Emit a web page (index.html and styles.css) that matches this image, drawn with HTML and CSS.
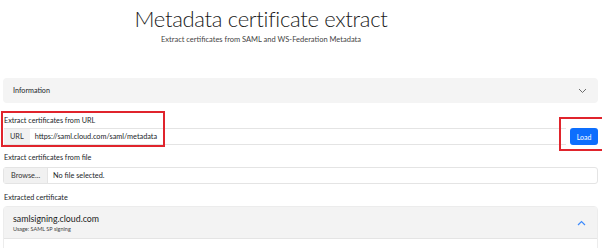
FILE: index.html
```html
<!DOCTYPE html>
<html lang="en">
<head>
  <meta charset="UTF-8">
  <title>Metadata certificate extract</title>
  <link rel="stylesheet" href="styles.css">
</head>
<body>
  <header class="top">
    <h1>Metadata certificate extract</h1>
    <p class="lead">Extract certificates from SAML and WS-Federation Metadata</p>
  </header>

  <main class="page">
    <div class="accordion">
      <span>Information</span>
      <svg class="chev" width="9" height="6" viewBox="0 0 9 6"><path d="M1 1l3.5 3.5L8 1" fill="none" stroke="#6c6c6c" stroke-width="1"/></svg>
    </div>

    <section class="field url-field">
      <label>Extract certificates from URL</label>
      <div class="row">
        <div class="group">
          <span class="addon">URL</span>
          <span class="value">https://saml.cloud.com/saml/metadata</span>
        </div>
        <button class="load">Load</button>
      </div>
      <div class="mark mark-url"></div>
      <div class="mark mark-load"></div>
    </section>

    <section class="field file-field">
      <label>Extract certificates from file</label>
      <div class="group file">
        <span class="addon browse">Browse...</span>
        <span class="value">No file selected.</span>
      </div>
    </section>

    <section class="field cert-field">
      <label>Extracted certificate</label>
      <div class="card">
        <div class="card-head">
          <div>
            <div class="cert-name">samlsigning.cloud.com</div>
            <div class="cert-use">Usage: SAML SP signing</div>
          </div>
          <svg class="chev" width="9" height="6" viewBox="0 0 9 6"><path d="M1 5l3.5-3.5L8 5" fill="none" stroke="#3d8bfd" stroke-width="1.2"/></svg>
        </div>
        <div class="card-body"></div>
      </div>
    </section>
  </main>
</body>
</html>
```

FILE: styles.css
```css
html {
  font-family: "Lato", sans-serif;
}

body {
  margin: 0;
  background-color: #fff;
  color: #212529;
}

.top {
  text-align: center;
  padding: 4px 80px 0 0;
}

h1 {
  font-weight: 300;
  font-size: 22px;
  letter-spacing: -0.3px;
  margin: 0;
  line-height: 30px;
  color: #1a1a1a;
}

.lead {
  font-size: 7.5px;
  line-height: 10px;
  margin: 1px 0 0;
  color: #444;
}

.page {
  padding: 0 4px 0 3px;
}

.accordion {
  margin-top: 33px;
  height: 25px;
  background-color: #f4f4f4;
  border-radius: 4px;
  display: flex;
  align-items: center;
  justify-content: space-between;
  padding: 0 11px 0 10px;
  font-size: 7.2px;
}

.field {
  position: relative;
}

label {
  display: block;
  font-size: 7.2px;
  line-height: 10px;
  padding: 0 1px;
}

.url-field label {
  padding-top: 13px;
  padding-bottom: 2px;
}

.file-field label {
  padding-top: 8px;
  padding-bottom: 4px;
}

.cert-field label {
  padding-top: 9px;
  padding-bottom: 3px;
}

.row {
  display: flex;
  align-items: center;
  gap: 4px;
}

.row .group {
  flex: 1;
  margin-left: 1px;
}

.group {
  display: flex;
  align-items: center;
  height: 17px;
  box-sizing: border-box;
  border-top: 1px solid #e4e4e4;
  border-bottom: 1px solid #e4e4e4;
  font-size: 7.3px;
}

.addon {
  background-color: #f1f1f1;
  height: 100%;
  display: flex;
  align-items: center;
  padding: 0 6px;
  color: #333;
}

.value {
  padding-left: 5px;
}

.load {
  background-color: #0d6efd;
  color: #fff;
  border: none;
  border-radius: 3px;
  font-family: "Lato", sans-serif;
  font-size: 7px;
  height: 17px;
  width: 28px;
  padding: 0;
}

.mark {
  position: absolute;
  box-sizing: border-box;
  border: 2px solid #e0242c;
}

.mark-url {
  left: -2px;
  top: 8px;
  width: 164px;
  height: 36px;
}

.mark-load {
  left: 556px;
  top: 14px;
  width: 50px;
  height: 34px;
}

.file {
  border: 1px solid #e4e4e4;
  border-radius: 3px;
}

.browse {
  border-right: 1px solid #e4e4e4;
  padding: 0 7px;
}

.card {
  border: 1px solid #ececec;
  border-radius: 4px 4px 0 0;
}

.card-head {
  background-color: #f3f3f3;
  height: 31px;
  border-bottom: 1px solid #e4e4e4;
  display: flex;
  align-items: center;
  justify-content: space-between;
  padding: 0 11px 0 9px;
}

.cert-name {
  font-size: 8.8px;
  color: #222;
}

.cert-use {
  font-size: 5.5px;
  color: #444;
  margin-top: 2px;
}

.card-body {
  height: 9px;
}
```
